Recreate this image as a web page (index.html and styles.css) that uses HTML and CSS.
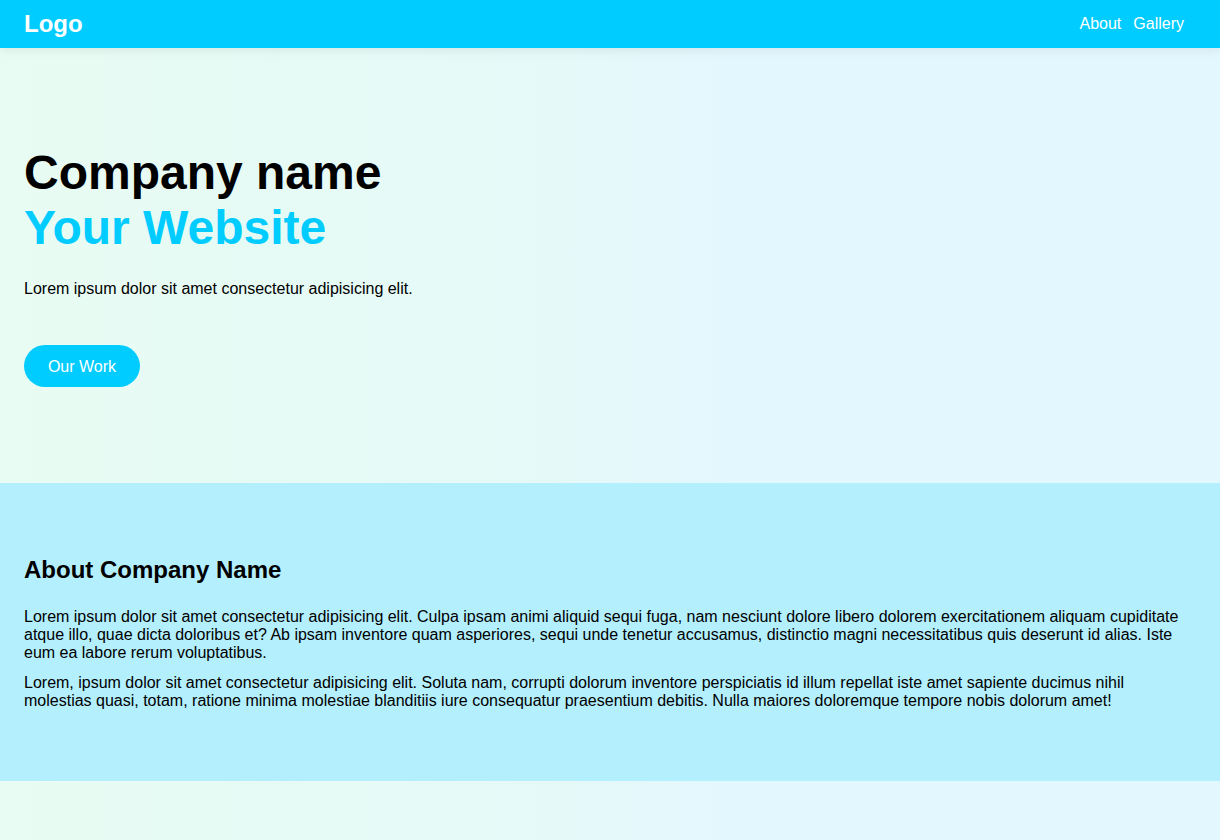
FILE: index.html
```html
<!DOCTYPE html>
<html lang="en">
<head>
<meta charset="utf-8">
<title>Company name</title>
<link rel="stylesheet" href="styles.css">
</head>
<body>
<header class="site-header">
  <a class="logo" href="#">Logo</a>
  <nav class="nav">
    <a href="#about">About</a>
    <a href="#gallery">Gallery</a>
  </nav>
</header>
<main>
  <section class="hero">
    <h1 class="hero-title">Company name<br><span class="accent">Your Website</span></h1>
    <p class="hero-text">Lorem ipsum dolor sit amet consectetur adipisicing elit.</p>
    <a class="btn" href="#gallery">Our Work</a>
  </section>
  <section class="about" id="about">
    <h2 class="about-title">About Company Name</h2>
    <p class="about-text">Lorem ipsum dolor sit amet consectetur adipisicing elit. Culpa ipsam animi aliquid sequi fuga, nam nesciunt dolore libero dolorem exercitationem aliquam cupiditate atque illo, quae dicta doloribus et? Ab ipsam inventore quam asperiores, sequi unde tenetur accusamus, distinctio magni necessitatibus quis deserunt id alias. Iste eum ea labore rerum voluptatibus.</p>
    <p class="about-text">Lorem, ipsum dolor sit amet consectetur adipisicing elit. Soluta nam, corrupti dolorum inventore perspiciatis id illum repellat iste amet sapiente ducimus nihil molestias quasi, totam, ratione minima molestiae blanditiis iure consequatur praesentium debitis. Nulla maiores doloremque tempore nobis dolorum amet!</p>
  </section>
</main>
</body>
</html>
```

FILE: styles.css
```css
* {
  box-sizing: border-box;
}

html, body {
  margin: 0;
  padding: 0;
}

body {
  min-height: 840px;
  font-family: "Liberation Sans", Arial, sans-serif;
  font-size: 16px;
  color: #000;
  background: linear-gradient(to right, #e8fcf3 0%, #e5f9f8 45%, #e3f8fe 60%, #e3f8fe 100%);
}

.site-header {
  height: 48px;
  display: flex;
  align-items: center;
  justify-content: space-between;
  padding: 0 36px 0 24px;
  background: #00ccff;
  box-shadow: 0 2px 10px rgba(0, 0, 0, 0.08);
  position: relative;
  z-index: 1;
}

.logo {
  color: #fff;
  font-size: 24px;
  font-weight: bold;
  text-decoration: none;
}

.nav {
  display: flex;
  gap: 12px;
}

.nav a {
  color: #fff;
  text-decoration: none;
  font-size: 16px;
}

.hero {
  padding: 97px 24px 96px;
}

.hero-title {
  margin: 0;
  font-size: 48px;
  font-weight: bold;
  line-height: 55px;
}

.accent {
  color: #00ccff;
}

.hero-text {
  margin: 25px 0 47px;
}

.btn {
  display: inline-flex;
  align-items: center;
  justify-content: center;
  width: 116px;
  height: 42px;
  padding-top: 2px;
  border-radius: 21px;
  background: #00ccff;
  color: #fff;
  text-decoration: none;
  font-size: 16px;
}

.about {
  background: #b3effd;
  padding: 73px 24px 71px;
}

.about-title {
  margin: 0 0 24px;
  font-size: 24px;
  font-weight: bold;
}

.about-text {
  margin: 0 0 12px;
  line-height: 18px;
}

.about-text:last-child {
  margin-bottom: 0;
}
```
